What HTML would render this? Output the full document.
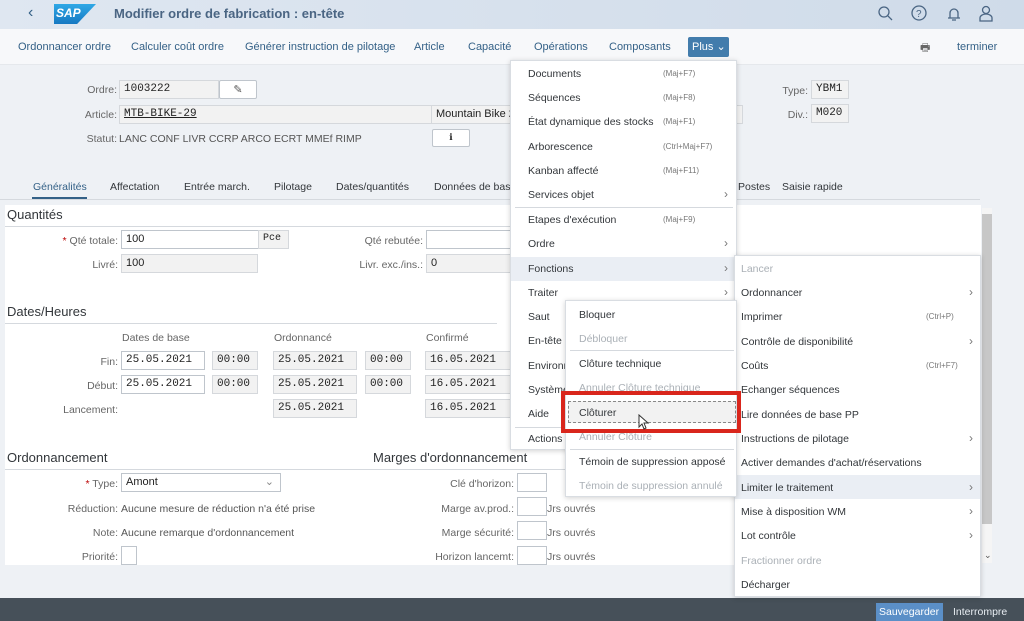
<!DOCTYPE html>
<html><head><meta charset="utf-8">
<style>
*{box-sizing:border-box;margin:0;padding:0}
body{width:1024px;height:621px;overflow:hidden;background:#eef1f5;font-family:"Liberation Sans",sans-serif;font-size:11px;color:#32363a;position:relative}
.a{position:absolute;white-space:nowrap}
.hdr{left:0;top:0;width:1024px;height:29px;background:linear-gradient(90deg,#dfe7f1,#cfdbe9)}
.tb{left:0;top:29px;width:1024px;height:36px;background:#f7f8fa;border-bottom:1px solid #e5e8ec}
.tb span{position:absolute;top:12px;color:#346187;font-size:11px}
.lbl{color:#666;font-size:10.5px;text-align:right}
.inp{position:absolute;height:19px;border:1px solid #bfc5cc;background:#fff;font-size:11px;padding:2px 4px;color:#222}
.ro{background:#f2f2f2;border-color:#d5d8dc}
.mono{font-family:"Liberation Mono",monospace;font-size:11px}
.panel{left:5px;top:205px;width:976px;height:360px;background:#fff}
.sec{font-size:13px;color:#32363a}
.line{position:absolute;height:1px;background:#d5d9de}
.menu{position:absolute;background:#fff;border:1px solid #d9dde2;box-shadow:0 1px 5px rgba(0,0,0,.18)}
.mi{position:absolute;font-size:10.5px;color:#32363a;white-space:nowrap}
.dis{color:#aab0b6}
.sc{position:absolute;font-size:8px;color:#777;white-space:nowrap}
.ch{position:absolute;font-size:12px;color:#777}
.tab{position:absolute;top:181px;font-size:10.5px;color:#32363a}
</style></head><body>
<div class="a hdr"></div>
<div class="a" style="left:28px;top:4px;font-size:16px;color:#346187">‹</div>
<div class="a" style="left:54px;top:4px;width:42px;height:20px;background:linear-gradient(180deg,#2fa8e6,#1678c2);clip-path:polygon(0 0,100% 0,55% 100%,0 100%)"></div>
<div class="a" style="left:56px;top:6px;font-size:12px;font-weight:bold;color:#fff;font-style:italic">SAP</div>
<div class="a" style="left:114px;top:6px;font-size:13px;font-weight:bold;color:#4a6583">Modifier ordre de fabrication : en-tête</div>
<svg class="a" style="left:876px;top:5px" width="120" height="18" fill="none" stroke="#4a6583" stroke-width="1.3">
<circle cx="8" cy="7" r="5"/><path d="M12 11l4 4"/>
<circle cx="43" cy="8" r="7"/><text x="40" y="12" font-size="10" fill="#4a6583" stroke="none" font-family="Liberation Sans">?</text>
<path d="M72 13h12M74 13v-5a4 4 0 0 1 8 0v5M76 15h4"/>
<circle cx="110" cy="5" r="3.5"/><path d="M104 16v-3a6 4 0 0 1 12 0v3z"/>
</svg>
<div class="a tb">
<span style="left:18px">Ordonnancer ordre</span>
<span style="left:131px">Calculer coût ordre</span>
<span style="left:245px">Générer instruction de pilotage</span>
<span style="left:414px">Article</span>
<span style="left:468px">Capacité</span>
<span style="left:534px">Opérations</span>
<span style="left:609px">Composants</span>
<span style="left:688px;top:8px;height:20px;width:41px;background:#427cac;color:#fff;padding:3px 4px;border-radius:2px">Plus ⌄</span>
<span style="left:920px;top:10px;color:#666">🖶</span>
<span style="left:957px">terminer</span>
</div>
<div class="a lbl" style="left:60px;top:84px;width:57px">Ordre:</div>
<div class="inp ro mono" style="left:119px;top:80px;width:100px">1003222</div>
<div class="inp" style="left:219px;top:80px;width:38px;border-radius:2px;text-align:center;color:#555">✎</div>
<div class="a lbl" style="left:60px;top:109px;width:57px">Article:</div>
<div class="inp ro mono" style="left:119px;top:105px;width:313px;text-decoration:underline">MTB-BIKE-29</div>
<div class="inp ro" style="left:431px;top:105px;width:312px">Mountain Bike 29</div>
<div class="a lbl" style="left:60px;top:133px;width:57px">Statut:</div>
<div class="a" style="left:119px;top:133px;font-size:10.5px;color:#555">LANC CONF LIVR CCRP ARCO ECRT MMEf RIMP</div>
<div class="inp" style="left:432px;top:129px;width:38px;height:18px;border-radius:2px;text-align:center;font-size:9px">ℹ</div>
<div class="a lbl" style="left:770px;top:85px;width:38px">Type:</div>
<div class="inp ro mono" style="left:811px;top:80px;width:38px">YBM1</div>
<div class="a lbl" style="left:770px;top:109px;width:38px">Div.:</div>
<div class="inp ro mono" style="left:811px;top:104px;width:38px">M020</div>
<div class="tab" style="left:33px;color:#346187">Généralités</div>
<div class="a" style="left:32px;top:197px;width:55px;height:2px;background:#346187"></div>
<div class="tab" style="left:110px">Affectation</div>
<div class="tab" style="left:184px">Entrée march.</div>
<div class="tab" style="left:274px">Pilotage</div>
<div class="tab" style="left:336px">Dates/quantités</div>
<div class="tab" style="left:434px">Données de base</div>
<div class="tab" style="left:738px">Postes</div>
<div class="tab" style="left:782px">Saisie rapide</div>
<div class="line" style="left:0;top:199px;width:980px"></div>
<div class="a panel"></div>
<div class="a" style="left:982px;top:208px;width:10px;height:355px;background:#f5f5f5"></div>
<div class="a" style="left:982px;top:214px;width:10px;height:310px;background:#c7c7c7"></div>
<div class="a sec" style="left:7px;top:207px">Quantités</div>
<div class="line" style="left:5px;top:226px;width:505px"></div>
<div class="a lbl" style="left:40px;top:235px;width:78px"><span style="color:#b00">*</span> Qté totale:</div>
<div class="inp" style="left:121px;top:230px;width:138px">100</div>
<div class="inp ro mono" style="left:258px;top:230px;width:31px;font-size:10px">Pce</div>
<div class="a lbl" style="left:330px;top:235px;width:93px">Qté rebutée:</div>
<div class="inp" style="left:426px;top:230px;width:90px"></div>
<div class="a lbl" style="left:40px;top:259px;width:78px">Livré:</div>
<div class="inp ro" style="left:121px;top:254px;width:137px">100</div>
<div class="a lbl" style="left:330px;top:259px;width:93px">Livr. exc./ins.:</div>
<div class="inp ro" style="left:426px;top:254px;width:90px">0</div>
<div class="a sec" style="left:7px;top:304px">Dates/Heures</div>
<div class="line" style="left:5px;top:323px;width:492px"></div>
<div class="a lbl" style="left:122px;top:332px;text-align:left">Dates de base</div>
<div class="a lbl" style="left:274px;top:332px;text-align:left">Ordonnancé</div>
<div class="a lbl" style="left:426px;top:332px;text-align:left">Confirmé</div>
<div class="a lbl" style="left:40px;top:356px;width:78px">Fin:</div>
<div class="inp mono" style="left:121px;top:351px;width:84px">25.05.2021</div>
<div class="inp ro mono" style="left:212px;top:351px;width:46px">00:00</div>
<div class="inp ro mono" style="left:273px;top:351px;width:84px">25.05.2021</div>
<div class="inp ro mono" style="left:365px;top:351px;width:46px">00:00</div>
<div class="inp ro mono" style="left:425px;top:351px;width:90px">16.05.2021</div>
<div class="a lbl" style="left:40px;top:380px;width:78px">Début:</div>
<div class="inp mono" style="left:121px;top:375px;width:84px">25.05.2021</div>
<div class="inp ro mono" style="left:212px;top:375px;width:46px">00:00</div>
<div class="inp ro mono" style="left:273px;top:375px;width:84px">25.05.2021</div>
<div class="inp ro mono" style="left:365px;top:375px;width:46px">00:00</div>
<div class="inp ro mono" style="left:425px;top:375px;width:90px">16.05.2021</div>
<div class="a lbl" style="left:40px;top:404px;width:78px">Lancement:</div>
<div class="inp ro mono" style="left:273px;top:399px;width:84px">25.05.2021</div>
<div class="inp ro mono" style="left:425px;top:399px;width:90px">16.05.2021</div>
<div class="a sec" style="left:7px;top:450px">Ordonnancement</div>
<div class="a sec" style="left:373px;top:450px">Marges d'ordonnancement</div>
<div class="line" style="left:5px;top:469px;width:560px"></div>
<div class="a lbl" style="left:40px;top:478px;width:78px"><span style="color:#b00">*</span> Type:</div>
<div class="inp" style="left:121px;top:473px;width:160px">Amont<span style="position:absolute;right:6px;top:1px;color:#888">⌄</span></div>
<div class="a lbl" style="left:40px;top:503px;width:78px">Réduction:</div>
<div class="a" style="left:121px;top:503px;font-size:10.5px;color:#555">Aucune mesure de réduction n'a été prise</div>
<div class="a lbl" style="left:40px;top:527px;width:78px">Note:</div>
<div class="a" style="left:121px;top:527px;font-size:10.5px;color:#555">Aucune remarque d'ordonnancement</div>
<div class="a lbl" style="left:40px;top:551px;width:78px">Priorité:</div>
<div class="inp" style="left:121px;top:546px;width:16px"></div>
<div class="a lbl" style="left:400px;top:478px;width:114px">Clé d'horizon:</div>
<div class="inp" style="left:517px;top:473px;width:30px"></div>
<div class="a lbl" style="left:400px;top:503px;width:114px">Marge av.prod.:</div>
<div class="inp" style="left:517px;top:497px;width:30px"></div>
<div class="a lbl" style="left:400px;top:527px;width:114px">Marge sécurité:</div>
<div class="inp" style="left:517px;top:521px;width:30px"></div>
<div class="a lbl" style="left:400px;top:551px;width:114px">Horizon lancemt:</div>
<div class="inp" style="left:517px;top:546px;width:30px"></div>
<div class="a lbl" style="left:547px;top:503px;text-align:left">Jrs ouvrés</div>
<div class="a lbl" style="left:547px;top:527px;text-align:left">Jrs ouvrés</div>
<div class="a lbl" style="left:547px;top:551px;text-align:left">Jrs ouvrés</div>
<div class="a" style="left:984px;top:550px;font-size:9px;color:#555">⌄</div>
<div class="a" style="left:0;top:598px;width:1024px;height:23px;background:#465059"></div>
<div class="a" style="left:876px;top:603px;width:67px;height:18px;background:#5b8fc7;color:#fff;font-size:10.5px;padding:3px 3px">Sauvegarder</div>
<div class="a" style="left:953px;top:606px;color:#e8edf2;font-size:10.5px">Interrompre</div>
<div class="menu" style="left:510px;top:60px;width:227px;height:390px">
<div class="a" style="left:0;top:196px;width:225px;height:24px;background:#eaeef4"></div>
<div class="line" style="left:4px;top:146px;width:218px"></div>
<div class="line" style="left:4px;top:366px;width:218px"></div>
<div class="mi" style="left:17px;top:7px">Documents</div><div class="sc" style="left:152px;top:8px">(Maj+F7)</div>
<div class="mi" style="left:17px;top:31px">Séquences</div><div class="sc" style="left:152px;top:32px">(Maj+F8)</div>
<div class="mi" style="left:17px;top:55px">État dynamique des stocks</div><div class="sc" style="left:152px;top:56px">(Maj+F1)</div>
<div class="mi" style="left:17px;top:80px">Arborescence</div><div class="sc" style="left:152px;top:81px">(Ctrl+Maj+F7)</div>
<div class="mi" style="left:17px;top:104px">Kanban affecté</div><div class="sc" style="left:152px;top:105px">(Maj+F11)</div>
<div class="mi" style="left:17px;top:128px">Services objet</div><div class="ch" style="left:213px;top:126px">›</div>
<div class="mi" style="left:17px;top:153px">Etapes d'exécution</div><div class="sc" style="left:152px;top:154px">(Maj+F9)</div>
<div class="mi" style="left:17px;top:177px">Ordre</div><div class="ch" style="left:213px;top:175px">›</div>
<div class="mi" style="left:17px;top:202px">Fonctions</div><div class="ch" style="left:213px;top:200px">›</div>
<div class="mi" style="left:17px;top:226px">Traiter</div><div class="ch" style="left:213px;top:224px">›</div>
<div class="mi" style="left:17px;top:250px">Saut</div>
<div class="mi" style="left:17px;top:274px">En-tête</div>
<div class="mi" style="left:17px;top:299px">Environnement</div>
<div class="mi" style="left:17px;top:323px">Système</div>
<div class="mi" style="left:17px;top:347px">Aide</div>
<div class="mi" style="left:17px;top:372px">Actions</div>
</div>
<div class="menu" style="left:734px;top:255px;width:247px;height:342px">
<div class="a" style="left:0;top:219px;width:245px;height:24px;background:#eaeef4"></div>
<div class="mi dis" style="left:6px;top:7px">Lancer</div>
<div class="mi" style="left:6px;top:31px">Ordonnancer</div><div class="ch" style="left:234px;top:29px">›</div>
<div class="mi" style="left:6px;top:55px">Imprimer</div><div class="sc" style="left:191px;top:56px">(Ctrl+P)</div>
<div class="mi" style="left:6px;top:80px">Contrôle de disponibilité</div><div class="ch" style="left:234px;top:78px">›</div>
<div class="mi" style="left:6px;top:104px">Coûts</div><div class="sc" style="left:191px;top:105px">(Ctrl+F7)</div>
<div class="mi" style="left:6px;top:128px">Echanger séquences</div>
<div class="mi" style="left:6px;top:153px">Lire données de base PP</div>
<div class="mi" style="left:6px;top:177px">Instructions de pilotage</div><div class="ch" style="left:234px;top:175px">›</div>
<div class="mi" style="left:6px;top:201px">Activer demandes d'achat/réservations</div>
<div class="mi" style="left:6px;top:226px">Limiter le traitement</div><div class="ch" style="left:234px;top:224px">›</div>
<div class="mi" style="left:6px;top:250px">Mise à disposition WM</div><div class="ch" style="left:234px;top:248px">›</div>
<div class="mi" style="left:6px;top:274px">Lot contrôle</div><div class="ch" style="left:234px;top:272px">›</div>
<div class="mi dis" style="left:6px;top:299px">Fractionner ordre</div>
<div class="mi" style="left:6px;top:323px">Décharger</div>
</div>
<div class="menu" style="left:565px;top:300px;width:172px;height:197px">
<div class="line" style="left:4px;top:49px;width:164px"></div>
<div class="line" style="left:4px;top:148px;width:164px"></div>
<div class="mi" style="left:13px;top:8px">Bloquer</div>
<div class="mi dis" style="left:13px;top:32px">Débloquer</div>
<div class="mi" style="left:13px;top:57px">Clôture technique</div>
<div class="mi dis" style="left:13px;top:81px">Annuler Clôture technique</div>
<div class="a" style="left:2px;top:100px;width:168px;height:22px;background:#f2f2f2;border:1px dashed #888"></div>
<div class="mi" style="left:13px;top:106px">Clôturer</div>
<div class="mi dis" style="left:13px;top:130px">Annuler Clôture</div>
<div class="mi" style="left:13px;top:155px">Témoin de suppression apposé</div>
<div class="mi dis" style="left:13px;top:179px">Témoin de suppression annulé</div>
</div>
<div class="a" style="left:561px;top:391px;width:180px;height:42px;border:4px solid #d9261c"></div>
<svg class="a" style="left:638px;top:414px" width="12" height="16"><path d="M1 1v12l3-3 2 5 2-1-2-5h4z" fill="#fff" stroke="#333" stroke-width="1"/></svg>
</body></html>
